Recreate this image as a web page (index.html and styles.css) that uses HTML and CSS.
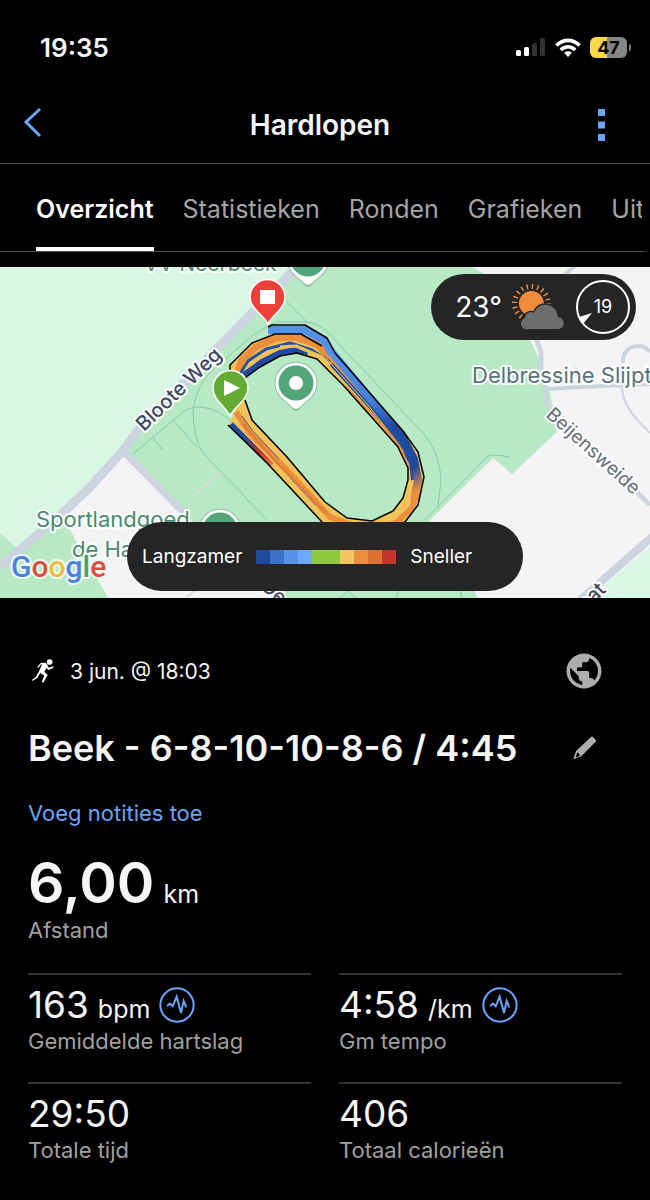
FILE: index.html
```html
<!DOCTYPE html>
<html lang="nl">
    <head>
        <meta charset="UTF-8">
        <meta name="viewport" content="width=device-width, initial-scale=1">
        <title>Hardlopen</title>
        <link rel="stylesheet" href="styles.css">
    </head>
    <body>
        <div class="statusbar">
            <span class="clock">19:35</span>
            <div class="indicators">
                <svg class="signal" width="30" height="19" viewBox="0 0 30 19">
                    <rect x="0" y="12" width="5" height="6" rx="1.500" fill="#fff"/>
                    <rect x="8" y="9" width="5" height="9" rx="1.500" fill="#fff"/>
                    <rect x="16" y="5" width="5" height="13" rx="1.500" fill="#333"/>
                    <rect x="24" y="0" width="5" height="18" rx="1.500" fill="#333"/>
                </svg>
                <svg class="wifi" width="26" height="20" viewBox="0 0 26 20">
                    <g fill="none" stroke="#fff" stroke-width="3.600">
                        <path d="M1.500 7.500C8 .6 18 .6 24.500 7.500"/>
                        <path d="M5.800 12C10 7.700 16 7.700 20.200 12"/>
                    </g>
                    <path d="M9 14.800C11.300 12.600 14.700 12.600 17 14.800L13 19Z" fill="#fff"/>
                </svg>
                <div class="battery"><span>47</span></div>
            </div>
        </div>

        <header class="topbar">
            <button class="icon-button" aria-label="Terug">
                <svg width="20" height="36" viewBox="0 0 20 36">
                    <path d="M17 2L3 15L17 29" fill="none" stroke="#6aa5f8" stroke-width="3"/>
                </svg>
            </button>
            <h1>Hardlopen</h1>
            <button class="icon-button more" aria-label="Meer">
                <svg width="8" height="32" viewBox="0 0 8 32">
                    <path d="M1 0h7v7h-7zM1 12.500h7v7h-7zM1 25h7v7h-7z" fill="#6aa5f8"/>
                </svg>
            </button>
        </header>

        <nav class="tabs">
            <a class="tab active" href="#overzicht">Overzicht</a>
            <a class="tab" href="#statistieken">Statistieken</a>
            <a class="tab" href="#ronden">Ronden</a>
            <a class="tab" href="#grafieken">Grafieken</a>
            <a class="tab" href="#uitrusting">Uitrusting</a>
        </nav>

        <main id="overzicht">
            <div class="map">
                <svg class="map-canvas" viewBox="0 267 650 331" preserveAspectRatio="xMidYMid slice">
                    <defs>
                        <linearGradient id="pace" gradientUnits="userSpaceOnUse" x1="340" y1="350" x2="418" y2="500">
                            <stop offset="0" stop-color="#5392ea"/>
                            <stop offset="0.350" stop-color="#4380dc"/>
                            <stop offset="0.550" stop-color="#1f4a9e"/>
                            <stop offset="0.820" stop-color="#1f4a9e"/>
                            <stop offset="0.950" stop-color="#ec8f3d"/>
                        </linearGradient>
                        <linearGradient id="start" gradientUnits="userSpaceOnUse" x1="230" y1="425" x2="275" y2="470">
                            <stop offset="0" stop-color="#1f4a9e"/>
                            <stop offset="0.300" stop-color="#1f4a9e"/>
                            <stop offset="0.650" stop-color="#c3342c"/>
                            <stop offset="1" stop-color="#ec8f3d"/>
                        </linearGradient>
                        <g id="poi">
                            <path d="M0 28C-3 28 -5 23 -12 18A21.500 21.500 0 1 1 12 18C5 23 3 28 0 28Z" fill="#5a8f74" opacity="0.450"/>
                            <path d="M0 26C-3 26 -5 22 -13 16A20.500 20.500 0 1 1 13 16C5 22 3 26 0 26Z" fill="#fff"/>
                            <circle r="17.500" fill="#52a679"/>
                            <circle r="7" fill="#fff"/>
                        </g>
                    </defs>

                    <!-- land -->
                    <rect y="267" width="650" height="331" fill="#b6e9c4"/>
                    <path d="M0 267H300L122 450L88 490L17 548L0 533Z" fill="#daf6e4"/>
                    <path d="M123 455L93 487L67 513L70 530L108 598H287L240 560L185 516Z" fill="#f5f3f5"/>
                    <path d="M472 267L483 273L530 340L540 360L550 393L557 432L512 474L493 458L430 520L478 598H650V267Z" fill="#f5f3f5"/>
                    <path d="M650 547L607 583L596 598H650Z" fill="#daf6e4"/>

                    <!-- roads -->
                    <g fill="none" stroke="#ccd4df" stroke-linejoin="round">
                        <path d="M300 264L250 315L140 428L122 452L90 487L62 514L0 567" stroke-width="9"/>
                        <path d="M122 450L185 514" stroke-width="7"/>
                        <path d="M536 338L541 352L541 375L547 403L650 505" stroke-width="5"/>
                        <path d="M548 389L580 387L650 384" stroke-width="4"/>
                        <path d="M623 363C622 350 632 346 638 346Q645 346 650 352" stroke-width="4"/>
                        <path d="M622 385C622 400 628 412 650 433" stroke-width="2"/>
                        <path d="M565 274L575 266" stroke-width="4"/>
                        <path d="M652 537L603 580L580 600" stroke-width="8"/>
                        <path d="M187 597L196 590M192 497L220 472" stroke="#d6dfdb" stroke-width="2"/>
                    </g>

                    <!-- footpaths -->
                    <g fill="none" stroke="#8bc8af" stroke-width="1">
                        <path d="M133 454L183 412Q190 407 197 407C210 407 220 412 230 420"/>
                        <path d="M172 419L198 448M153 438L163 450M287 302L307 322"/>
                        <path d="M267 520L203 453Q194 440 193 412C194 395 203 378 215 368L252 336Q268 325 278 322H307Q322 324 333 338L423 433Q440 452 441 480L438 507"/>
                        <path d="M425 520L487 457Q490 453 510 457"/>
                        <path d="M340 598L348 591L356 598M395 598L400 590M462 598L460 590"/>
                    </g>

                    <!-- map labels -->
                    <g class="map-label">
                        <text class="place" x="144" y="271" font-size="21">VV Neerbeek</text>
                        <text class="place" x="36" y="527" font-size="22">Sportlandgoed</text>
                        <text class="place" x="72" y="557" font-size="22">de Ha</text>
                        <text class="company" x="472" y="383" font-size="22">Delbressine Slijpt</text>
                        <text class="road" transform="translate(144 432) rotate(-44)" font-size="20">Bloote Weg</text>
                        <text class="lane" transform="translate(545 416) rotate(42)" font-size="19">Beijensweide</text>
                        <text class="road" transform="translate(607 591) rotate(-44)" font-size="20" text-anchor="end">straat</text>
                        <text class="road" transform="translate(260 588) rotate(42)" font-size="20">De</text>
                    </g>

                    <use href="#poi" x="308" y="259"/>
                    <use href="#poi" x="296" y="383"/>
                    <use href="#poi" x="220" y="530"/>

                    <!-- laps on the track -->
                    <path fill="#f1c35a" fill-rule="evenodd" d="M230 365L252 343L275 334L305 336L327 338L335 353L403 431L418 452L424 477L418 505L405 522L380 535H335L322 522L267 463L228 425L234 415Z
                        M245 378L260 367L280 356L297 353L317 359L343 385L383 430L398 447L408 468V480L403 498L393 511L372 521L347 518L325 502L287 457L252 420L245 400Z"/>
                    <g fill="none" stroke-linejoin="round">
                        <path d="M236 376L242 360L256 347L276 338L296 337L318 345L345 374L392 427" stroke="#ec8f3d" stroke-width="7"/>
                        <path d="M236 412L250 433L285 468L330 517L360 528L395 524L412 508L417 490" stroke="#ec8f3d" stroke-width="6"/>
                        <path d="M243 424L275 461L326 513" stroke="#de7a36" stroke-width="2"/>
                        <path d="M240 374L248 361L266 349L290 343L312 350L330 362" stroke="#26539f" stroke-width="3"/>
                        <path d="M244 375L262 362L280 353L296 350L308 352" stroke="#1f4a9e" stroke-width="6"/>
                        <path d="M280 347L296 346L322 357L352 390L388 431L405 455" stroke="#f1c35a" stroke-width="3"/>
                        <path d="M331 364L372 409L396 437L411 463L413 480" stroke="#24509f" stroke-width="4"/>
                        <path d="M326 358L368 405L400 446" stroke="#f1c35a" stroke-width="1"/>
                        <path d="M345 386L384 427L402 450L409 469" stroke="#ec8f3d" stroke-width="2"/>
                        <path d="M330 350L403 438L414 459L418 480L414 500" stroke="url(#pace)" stroke-width="8"/>
                        <path d="M268 330H305L325 341L332 354" stroke="#5392ea" stroke-width="8"/>
                        <path d="M231 424L272 465" stroke="url(#start)" stroke-width="5"/>
                        <path d="M242 416L252 430L278 458" stroke="#4d617b" stroke-width="1"/>
                        <path d="M290 478L315 505" stroke="#8e8296" stroke-width="1"/>
                    </g>
                    <g fill="none" stroke="#000" stroke-width="1.500" stroke-linejoin="round">
                        <path d="M230 376V365L252 343L275 334H301L322 346"/>
                        <path d="M268 327L272 325H305L327 338L335 353L403 431L418 452L424 477L418 505L405 522L380 535H335L322 522L267 463L228 425"/>
                        <path d="M245 378L260 367L280 356L297 353L317 359L343 385L383 430L398 447L408 468V480L403 498L393 511L372 521L347 518L325 502L287 457L252 420L245 400"/>
                    </g>

                    <!-- finish and start -->
                    <g stroke="#fff" stroke-width="1.500">
                        <path d="M268 324C264 315 250 309 250 297A17.500 17.500 0 0 1 285 297C285 309 272 315 268 324Z" fill="#ee4038"/>
                        <path d="M230 416C226 407 213 400 213 388A17.500 17.500 0 0 1 248 388C248 400 234 407 230 416Z" fill="#64ab33"/>
                    </g>
                    <path d="M260 290h15v14h-15zM224 380V396L240 388Z" fill="#fff"/>

                    <text class="google" x="11" y="577" font-size="30"><tspan fill="#4a80e8">G</tspan><tspan fill="#d9503f">o</tspan><tspan fill="#edbd3c">o</tspan><tspan fill="#4a80e8">g</tspan><tspan fill="#4da663">l</tspan><tspan fill="#d9503f">e</tspan></text>
                </svg>

                <div class="weather">
                    <span class="degrees">23°</span>
                    <svg width="54" height="46" viewBox="0 0 162 138">
                        <circle cx="58" cy="58" r="48" fill="none" stroke="#ee8b3c" stroke-width="20" stroke-dasharray="4 11.080"/>
                        <circle cx="58" cy="58" r="43" fill="#252525"/>
                        <circle cx="58" cy="58" r="37" fill="#ee8b3c"/>
                        <path d="M52 137A19 19 0 0 1 37 101C38 86 53 79 65 84C72 67 87 60 101 60C122 60 138 77 139 98A20 20 0 0 1 143 137Z" fill="#6d6d6d" stroke="#252525" stroke-width="4"/>
                    </svg>
                    <div class="wind">
                        <svg width="54" height="54" viewBox="0 0 54 54">
                            <circle cx="27" cy="27" r="26" fill="none" stroke="#fff" stroke-width="2"/>
                            <path d="M3 37L16 33L7 44Z" fill="#fff"/>
                        </svg>
                        <span>19</span>
                    </div>
                </div>

                <div class="legend">
                    <span>Langzamer</span>
                    <div class="scale">
                        <i class="c1"></i><i class="c2"></i><i class="c3"></i><i class="c4"></i><i class="c5"></i>
                        <i class="c5"></i><i class="c6"></i><i class="c7"></i><i class="c8"></i><i class="c9"></i>
                    </div>
                    <span>Sneller</span>
                </div>
            </div>

            <section class="details">
                <div class="row when">
                    <svg class="runner" width="22" height="24" viewBox="0 0 66 72">
                        <circle cx="53" cy="9" r="8.500" fill="#fff"/>
                        <path d="M43 13L27 14L17 25" fill="none" stroke="#fff" stroke-width="4"/>
                        <path d="M31 14L45 15L50 26L63 22L65 26L49 33L43 27L37 38L47 48L34 71L29 68L37 50L25 42L15 58L1 66L0 62L11 54L21 37Z" fill="#fff"/>
                    </svg>
                    <time>3 jun. @ 18:03</time>
                    <button class="icon-button privacy" aria-label="Openbaar">
                        <svg width="42" height="42" viewBox="0 0 24 24">
                            <path fill="#adadad" d="M12 2C6.480 2 2 6.480 2 12s4.480 10 10 10 10-4.480 10-10S17.520 2 12 2zm-1 17.930c-3.950-.490-7-3.850-7-7.930 0-.620.080-1.210.210-1.790L9 15v1c0 1.100.900 2 2 2v1.930zm6.900-2.540c-.260-.810-1-1.390-1.900-1.390h-1v-3c0-.550-.450-1-1-1H8v-2h2c.550 0 1-.450 1-1V7h2c1.100 0 2-.900 2-2v-.410c2.930 1.190 5 4.060 5 7.410 0 2.080-.800 3.970-2.100 5.390z"/>
                        </svg>
                    </button>
                </div>

                <div class="row name">
                    <h2>Beek - 6-8-10-10-8-6 / 4:45</h2>
                    <button class="icon-button edit" aria-label="Naam bewerken">
                        <svg width="24" height="24" viewBox="0 0 72 72">
                            <path fill="#adadad" fill-rule="evenodd" d="M54 3Q57 0 60 3L68 11Q71 14 68 17L25 61L1 70L9 45ZM14 49L8 62L13 64L21 58Z"/>
                        </svg>
                    </button>
                </div>

                <a class="notes" href="#notities">Voeg notities toe</a>

                <div class="distance">
                    <div class="value"><strong>6,00</strong> <span class="unit">km</span></div>
                    <div class="label">Afstand</div>
                </div>

                <div class="stats">
                    <div class="stat">
                        <div class="value">163 <span class="unit">bpm</span>
                            <button class="icon-button chart" aria-label="Grafiek hartslag">
                                <svg width="36" height="36" viewBox="0 0 108 108">
                                    <circle cx="54" cy="54" r="50" fill="none" stroke="#6aa5f8" stroke-width="6"/>
                                    <path d="M24 57L33 50L41 58L53 29L66 78L74 42L82 61" fill="none" stroke="#6aa5f8" stroke-width="6"/>
                                </svg>
                            </button>
                        </div>
                        <div class="label">Gemiddelde hartslag</div>
                    </div>
                    <div class="stat">
                        <div class="value">4:58 <span class="unit">/km</span>
                            <button class="icon-button chart" aria-label="Grafiek tempo">
                                <svg width="36" height="36" viewBox="0 0 108 108">
                                    <circle cx="54" cy="54" r="50" fill="none" stroke="#6aa5f8" stroke-width="6"/>
                                    <path d="M24 57L33 50L41 58L53 29L66 78L74 42L82 61" fill="none" stroke="#6aa5f8" stroke-width="6"/>
                                </svg>
                            </button>
                        </div>
                        <div class="label">Gm tempo</div>
                    </div>
                    <div class="stat">
                        <div class="value">29:50</div>
                        <div class="label">Totale tijd</div>
                    </div>
                    <div class="stat">
                        <div class="value">406</div>
                        <div class="label">Totaal calorieën</div>
                    </div>
                </div>
            </section>
        </main>
    </body>
</html>
```

FILE: styles.css
```css
*{
    box-sizing: border-box;
}

body{
    margin: 0;
    background: black;
    color: #f5f5f5;
    font-family: Inter, "Liberation Sans", sans-serif;
    overflow-x: hidden;
}

a{
    text-decoration: none;
}

svg{
    display: block;
}

.icon-button{
    display: flex;
    padding: 0;
    border: 0;
    background: none;
}

/* status bar */

.statusbar{
    display: flex;
    justify-content: space-between;
    align-items: center;
    height: 86px;
    padding: 9px 20px 0 40px;
}

.clock{
    font-size: 26px;
    font-weight: 600;
}

.indicators{
    display: flex;
    align-items: center;
    gap: 9px;
}

.battery{
    position: relative;
    width: 37px;
    height: 21px;
    margin-right: 3px;
    border-radius: 6px;
    background: linear-gradient(to right, #fad749 47%, #858585 47%);
    color: black;
    font-size: 18px;
    font-weight: 700;
    line-height: 21px;
    text-align: center;
}

.battery::after{
    content: "";
    position: absolute;
    right: -4px;
    top: 7px;
    width: 2px;
    height: 7px;
    border-radius: 0 2px 2px 0;
    background: #777;
}

/* title and tabs */

.topbar{
    display: flex;
    justify-content: space-between;
    align-items: center;
    height: 78px;
    padding: 0 45px 0 23px;
    border-bottom: 1px solid #505050;
}

.topbar h1{
    flex: 1;
    margin: 0;
    font-size: 28px;
    font-weight: 600;
    text-align: center;
}

.tabs{
    display: flex;
    gap: 29px;
    height: 88px;
    padding-left: 36px;
    border-bottom: 1px solid #505050;
    border-right: 8px solid black;
    overflow: hidden;
}

.tab{
    border-bottom: 4px solid transparent;
    color: #a5a5a5;
    font-size: 25px;
    line-height: 90px;
}

.tab.active{
    border-bottom-color: white;
    color: white;
    font-weight: 600;
}

/* map */

.map{
    position: relative;
    margin-top: 15px;
}

.map-canvas{
    width: 100%;
}

.map-label text{
    paint-order: stroke;
    stroke: white;
    stroke-width: 4px;
    stroke-linejoin: round;
}

.place{
    fill: #478a70;
}

.company{
    fill: #57717d;
}

.road{
    fill: #3c4862;
    font-weight: 500;
}

.lane{
    fill: #656c76;
}

.google{
    font-family: Roboto, sans-serif;
    font-weight: 500;
    paint-order: stroke;
    stroke: #effaf2;
    stroke-width: 4px;
    stroke-linejoin: round;
}

.weather, .legend{
    position: absolute;
    display: flex;
    align-items: center;
    background: #252525;
    color: white;
}

.weather{
    top: 7px;
    right: 14px;
    gap: 10px;
    height: 66px;
    padding: 0 6px 0 24px;
    border-radius: 33px;
}

.degrees{
    font-size: 28px;
}

.wind{
    position: relative;
}

.wind span{
    position: absolute;
    inset: 0;
    font-size: 18px;
    line-height: 54px;
    text-align: center;
}

.legend{
    bottom: 7px;
    left: 50%;
    gap: 14px;
    width: 396px;
    height: 69px;
    padding-left: 15px;
    border-radius: 35px;
    transform: translateX(-50%);
    font-size: 19px;
}

.scale{
    display: flex;
    height: 14px;
}

.scale i{
    width: 14px;
}

.c1{ background: #2049a0; }
.c2{ background: #3a72c8; }
.c3{ background: #5592ec; }
.c4{ background: #6ea8f8; }
.c5{ background: #8fca3f; }
.c6{ background: #f3c65f; }
.c7{ background: #ec8f3d; }
.c8{ background: #de7030; }
.c9{ background: #c3342c; }

/* activity details */

.details{
    padding: 52px 28px 32px;
}

.row{
    display: flex;
    align-items: center;
}

.when{
    padding: 0 17px 0 4px;
    font-size: 21px;
}

.when time{
    margin-left: 16px;
}

.privacy, .edit{
    margin-left: auto;
}

.name{
    margin-top: 34px;
    padding-right: 25px;
}

.name h2{
    margin: 0;
    font-size: 36px;
    font-weight: 600;
    line-height: 44px;
}

.notes{
    display: block;
    margin-top: 29px;
    color: #6aa5f8;
    font-size: 22px;
    line-height: 28px;
}

.value{
    display: flex;
    align-items: baseline;
    gap: 9px;
    font-size: 37px;
    line-height: 44px;
}

.unit{
    font-size: 25px;
    line-height: 28px;
}

.label{
    color: #a0a0a0;
    font-size: 22px;
    line-height: 28px;
}

.distance{
    margin-top: 23px;
}

.distance .value{
    line-height: 66px;
}

.distance .unit{
    line-height: 28px;
}

.distance strong{
    font-size: 57px;
    font-weight: 600;
}

.stats{
    display: grid;
    grid-template-columns: 1fr 1fr;
    column-gap: 28px;
    margin-top: 29px;
}

.stat{
    height: 109px;
    padding-top: 8px;
    border-top: 2px solid #333;
}

.chart{
    align-self: center;
}
```
